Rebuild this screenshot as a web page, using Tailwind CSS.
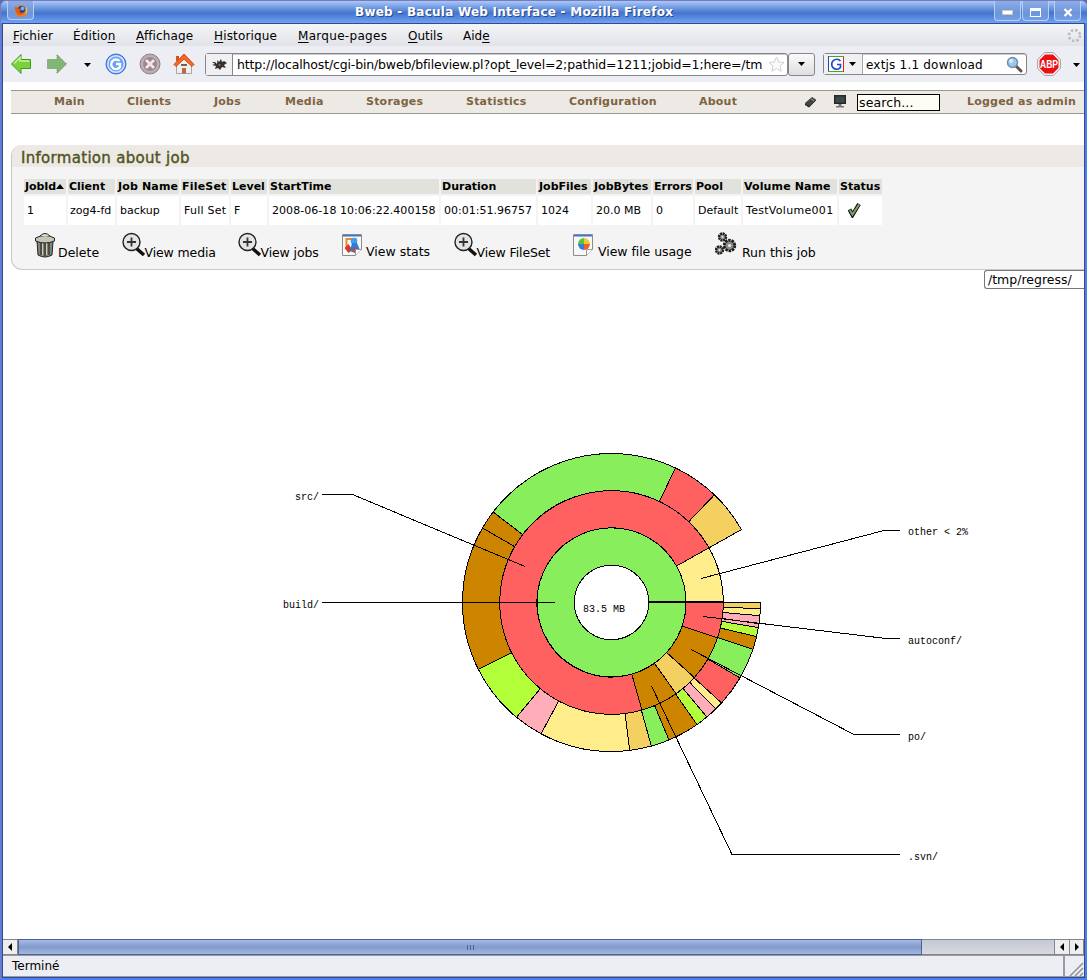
<!DOCTYPE html>
<html lang="fr">
<head>
<meta charset="utf-8">
<title>Bweb - Bacula Web Interface</title>
<script src="https://cdn.jsdelivr.net/npm/@tailwindcss/browser@4"></script>
</head>
<body class="w-[1087px] h-[980px] overflow-hidden bg-[#5e6aa8] font-['DejaVu_Sans',sans-serif] text-[13px] leading-none text-black whitespace-nowrap">
<div class="w-full h-full flex flex-col rounded-t-md overflow-hidden bg-[#4a80f0] border-l border-t border-[#7a7ab8]">

  <!-- Title bar -->
  <header class="h-[22px] shrink-0 flex items-start bg-linear-to-b from-[#a9c8fb] via-[#4574cc] via-55% to-[#6fa3f8]">
    <div class="ml-[6px] w-[27px] h-[19px] rounded-b-sm border border-t-0 border-[#b5d0f8] bg-[#7fa3df]/70 flex justify-center pt-[3px]">
      <svg width="14" height="14" viewBox="0 0 14 14"><circle cx="7" cy="7" r="6" fill="#ee7a14"/><circle cx="7.500" cy="5.500" r="3.600" fill="#1f3f94"/><circle cx="8.500" cy="4.500" r="2" fill="#67b4ee"/><path d="M1 2.500L4.500 4.500L7 5.500L5.500 7.500Q7 10 10.500 8Q9 11.500 5 11Q1 9 1 2.500Z" fill="#e05a10"/><path d="M12 2q3 5-1 9q2-4 1-9" fill="#ffd23c"/></svg>
    </div>
    <div class="ml-[321px] w-[322px] pt-[5px] font-bold text-[12px] tracking-[0.24px] text-white [text-shadow:1px_1px_0_#2c4a86]">Bweb - Bacula Web Interface - Mozilla Firefox</div>
    <div class="ml-[317px] flex">
      <div class="w-[27px] h-[20px] rounded-b-sm border border-t-0 border-[#b5d0f8] bg-[#7fa3df]/70 flex items-center justify-center pt-[3px]"><i class="block w-[11px] h-[5px] bg-white border border-[#cfc8c0]"></i></div>
      <div class="ml-[1px] w-[27px] h-[20px] rounded-b-sm border border-t-0 border-[#b5d0f8] bg-[#7fa3df]/70 flex items-center justify-center pt-[3px]"><i class="block w-[11px] h-[9px] border border-t-[3px] border-white"></i></div>
      <div class="ml-[5px] w-[27px] h-[20px] rounded-b-sm border border-t-0 border-[#b5d0f8] bg-[#7fa3df]/70 flex items-center justify-center pt-[4px]"><svg width="10" height="9" viewBox="0 0 10 9"><path d="M1.500 1l7 7M8.500 1l-7 7" stroke="#fff" stroke-width="2.200"/></svg></div>
    </div>
  </header>

  <div class="grow min-h-0 mx-[1px] mb-[2px] mr-[2px] border border-[#39488a] bg-white flex flex-col">
    <!-- Menu bar -->
    <nav class="h-[22px] shrink-0 flex pt-[6px] pl-[10px] bg-linear-to-b from-[#f4f5f6] to-[#e1e3e8] text-[12px]">
      <div class="w-[60px] tracking-[0.12px]"><u class="underline-offset-2">F</u>ichier</div>
      <div class="w-[63px] tracking-[0.12px]">Éditio<u class="underline-offset-2">n</u></div>
      <div class="w-[78px] tracking-[0.12px]"><u class="underline-offset-2">A</u>ffichage</div>
      <div class="w-[84px] tracking-[0.15px]"><u class="underline-offset-2">H</u>istorique</div>
      <div class="w-[110px] tracking-[0.3px]"><u class="underline-offset-2">M</u>arque-pages</div>
      <div class="w-[55px]"><u class="underline-offset-2">O</u>utils</div>
      <div class="w-[604px]">Aid<u class="underline-offset-2">e</u></div>
      <svg class="-mt-[2px]" width="15" height="15" viewBox="0 0 15 15"><circle cx="7.500" cy="7.500" r="5.500" fill="none" stroke="#b9babd" stroke-width="2.600" stroke-dasharray="2.300 2.020"/></svg>
    </nav>

    <!-- Toolbar -->
    <div class="h-[36px] shrink-0 flex items-center bg-[#edeef3] pl-[8px]">
      <svg width="21" height="22" viewBox="0 0 21 22"><path d="M.5 11L10 1.500V6.500H19.500V15.500H10V20.500Z" fill="#7bd13c" stroke="#3f9a1c"/><path d="M3 10.500L9 4.500V8H18.500" fill="none" stroke="#c6f0a0" stroke-width="1.500"/></svg>
      <svg class="ml-[14px]" width="21" height="22" viewBox="0 0 21 22"><path d="M20.500 11L11 1.500V6.500H1.500V15.500H11V20.500Z" fill="#83b573" stroke="#5d9150" stroke-dasharray="1 1"/></svg>
      <svg class="ml-[17px] mt-[2px]" width="7" height="4" viewBox="0 0 7 4"><path d="M0 0h7L3.500 4z"/></svg>
      <svg class="ml-[14px]" width="22" height="22" viewBox="0 0 22 22"><circle cx="11" cy="11" r="10" fill="#4b8af0" stroke="#3a72d4"/><circle cx="11" cy="11" r="8.300" fill="#6aa0f4" stroke="#dce9ff" stroke-width="1.500"/><path d="M14.500 8A4.800 4.800 0 1 0 15 14V11H11" fill="none" stroke="#fff" stroke-width="2.400"/></svg>
      <svg class="ml-[12px]" width="22" height="22" viewBox="0 0 22 22"><circle cx="11" cy="11" r="10" fill="#b8acae" stroke="#86868a"/><circle cx="11" cy="11" r="7.500" fill="#a08488" stroke="#c9b6b9"/><path d="M7 7l8 8M15 7l-8 8" stroke="#efe6ea" stroke-width="2.800"/></svg>
      <svg class="ml-[12px]" width="22" height="22" viewBox="0 0 22 22"><path d="M3.500 10V20.500H18.500V10L11 4Z" fill="#f1efee" stroke="#aaa3a0"/><path d="M3 3h3v5H3z" fill="#d0551c"/><path d="M1 11.500L11 1L21 11.500L19 13.500L11 6L3 13.500Z" fill="#f4682a" stroke="#d34a12"/><path d="M9 15h4v5.500H9z" fill="#b26a48"/><path d="M8 11h6v2H8z" fill="#7a5c58"/></svg>

      <div class="ml-[10px] w-[583px] h-[23px] rounded-[3px] border border-[#85868c] bg-white flex items-center shadow-[inset_0_1px_0_#ccc]">
        <div class="w-[27px] h-full bg-[#f0f0f3] border-r border-[#85868c] flex items-center justify-center">
          <svg width="15" height="11" viewBox="0 0 15 11"><path d="M0 3L3 3L5 5L5.500 1L7 3L9 0L10 3L12 2L15 4L12 6L14 9L10 8L8 11L6 9L3 10L4 7L0 6L3 5Z" fill="#33302f"/><circle cx="7.500" cy="6" r="1" fill="#b66a3a"/></svg>
        </div>
        <div class="ml-[4px] mt-[2px] w-[528px] text-[12.500px] tracking-[-0.155px] leading-[18px]"><span>http://localhost/cgi-bin/bweb/bfileview.pl?opt_level=2;pathid=1211;jobid=1;here=/tm</span></div>
        <svg class="ml-[3px]" width="17" height="16" viewBox="0 0 17 16"><path d="M8.500 1l2.200 5 5.300.5-4 3.600 1.200 5.200-4.700-2.800-4.700 2.800L5 10.100 1 6.500 6.300 6z" fill="#fbfbfb" stroke="#cfcfcf"/></svg>
      </div>
      <div class="w-[27px] h-[23px] rounded-[3px] border border-[#85868c] bg-linear-to-b from-[#fafafa] to-[#dfdfe0] flex items-center justify-center"><svg width="7" height="4" viewBox="0 0 7 4"><path d="M0 0h7L3.500 4z"/></svg></div>
      <div class="ml-[8px] w-[204px] h-[22px] rounded-[3px] border border-[#85868c] bg-white flex items-center shadow-[inset_0_1px_0_#ccc]">
        <div class="w-[39px] h-full bg-[#f0f0f3] border-r border-[#a5a6ac] flex items-center pl-[4px] gap-[5px]">
          <svg width="16" height="16" viewBox="0 0 16 16"><path d="M0 0h16v16H0z" fill="#fff"/><path d="M0 .5H16" stroke="#3faa28"/><path d="M.5 0V16" stroke="#2343c0"/><path d="M0 15.500H16" stroke="#3faa28"/><path d="M15.500 1V16" stroke="#e02020"/><path d="M12.500 5A5 5 0 1 0 12.500 11.500V8.500H9" fill="none" stroke="#2745c4" stroke-width="1.700"/></svg>
          <svg width="7" height="4" viewBox="0 0 7 4"><path d="M0 0h7L3.500 4z"/></svg>
        </div>
        <div class="ml-[3px] mt-[2px] w-[140px] text-[12px] tracking-[0.2px] leading-[18px]"><span>extjs 1.1 download</span></div>
        <svg width="17" height="17" viewBox="0 0 17 17"><path d="M10 10l5 5" stroke="#5a5450" stroke-width="3" stroke-linecap="round"/><circle cx="6.500" cy="6.500" r="5" fill="#9cc8f0" stroke="#6d8fae" stroke-width="1.500"/><circle cx="5" cy="5" r="2" fill="#d8ecfb"/></svg>
      </div>
      <svg class="ml-[10px]" width="24" height="24" viewBox="0 0 24 24"><path d="M7.500.7h9l6.800 6.800v9l-6.800 6.800h-9L.7 16.500v-9z" fill="#fff" stroke="#999"/><path d="M8 2.500h8l5.500 5.500v8L16 21.500H8L2.500 16V8z" fill="#ed0f12"/><text x="12" y="16" text-anchor="middle" textLength="18" lengthAdjust="spacingAndGlyphs" font-family="Liberation Sans" font-weight="bold" font-size="11.500" fill="#fff">ABP</text></svg>
      <svg class="ml-[12px] mt-[2px]" width="7" height="4" viewBox="0 0 7 4"><path d="M0 0h7L3.500 4z"/></svg>
    </div>

    <!-- Page -->
    <main class="grow min-h-0 pt-[8px] pl-[8px] flex flex-col overflow-hidden">
      <div class="h-[24px] shrink-0 border-y border-[#9a978f] bg-[#edeae5] flex items-center font-bold text-[11px] tracking-[0.22px] text-[#7d6341]">
        <div class="w-[73px] ml-[43px] -mt-[2px]"><span>Main</span></div>
        <div class="w-[87px] -mt-[2px]"><span>Clients</span></div>
        <div class="w-[71px] -mt-[2px]"><span>Jobs</span></div>
        <div class="w-[81px] -mt-[2px]"><span>Media</span></div>
        <div class="w-[100px] -mt-[2px]"><span>Storages</span></div>
        <div class="w-[103px] -mt-[2px]"><span>Statistics</span></div>
        <div class="w-[130px] -mt-[2px]"><span>Configuration</span></div>
        <div class="w-[105px] -mt-[2px]"><span>About</span></div>
        <svg width="13" height="12" viewBox="0 0 13 12"><path d="M1 7L8 1L12 3.500L5 10.500Z" fill="#444"/><path d="M1 7v2l4 2.500 7-7V3.500L5 10z" fill="#222"/><path d="M7 3l3 1.500" stroke="#999"/></svg>
        <svg class="ml-[17px] -mt-[2px]" width="12" height="13" viewBox="0 0 12 13"><path d="M0 0h12v9H0z" fill="#26292b"/><path d="M1.500 1.500h9v6h-9z" fill="#3e474a"/><path d="M4.500 9h3v2h2.500v1.500H2V11h2.500z" fill="#777"/></svg>
        <div class="ml-[11px] w-[83px] h-[17px] mt-[1px] border border-black bg-[#fffcf6] text-black font-normal text-[12.500px] tracking-[0.12px] leading-[16px] pl-[1px]"><span>search...</span></div>
        <div class="ml-[27px] -mt-[2px]"><span>Logged as admin</span></div>
      </div>

      <section class="mt-[31px] h-[125px] shrink-0 rounded-l-[11px] bg-[#f4f4f4] border-l border-b border-[#c9c9c9] overflow-hidden">
        <h1 class="h-[22px] bg-[#edeae5] pl-[9px] pt-[6px] text-[15px] tracking-[0.3px] text-[#515422] [-webkit-text-stroke:0.4px_#515422]"><span>Information about job</span></h1>
        <div class="mt-[12px] ml-[12px] grid gap-x-[2px] gap-y-[2px] grid-cols-[42px_47px_62px_48px_36px_170px_95px_53px_58px_40px_46px_94px_43px] grid-rows-[15px_29px] text-[11px] *:flex *:items-center">
          <b class="bg-[#e2e2dc] pl-px tracking-[-0.1px]">JobId<svg class="shrink-0" width="8" height="5" viewBox="0 0 8 5"><path d="M0 5L4 0L8 5z"/></svg></b>
          <b class="bg-[#e2e2dc] pl-px">Client</b><b class="bg-[#e2e2dc] pl-px tracking-[0.15px]">Job Name</b><b class="bg-[#e2e2dc] pl-px tracking-[0.2px]">FileSet</b><b class="bg-[#e2e2dc] pl-px">Level</b><b class="bg-[#e2e2dc] pl-px">StartTime</b><b class="bg-[#e2e2dc] pl-px">Duration</b><b class="bg-[#e2e2dc] pl-px">JobFiles</b><b class="bg-[#e2e2dc] pl-px">JobBytes</b><b class="bg-[#e2e2dc] pl-px">Errors</b><b class="bg-[#e2e2dc] pl-px">Pool</b><b class="bg-[#e2e2dc] pl-px tracking-[0.12px]">Volume Name</b><b class="bg-[#e2e2dc] pl-px">Status</b>
          <div class="bg-white pl-[3px]">1</div><div class="bg-white pl-[2px]">zog4-fd</div><div class="bg-white pl-[3px]">backup</div><div class="bg-white pl-[3px] tracking-[0.25px]">Full Set</div><div class="bg-white pl-[3px]">F</div><div class="bg-white pl-[3px] tracking-[0.05px]">2008-06-18 10:06:22.400158</div><div class="bg-white pl-[3px]">00:01:51.96757</div><div class="bg-white pl-[3px]">1024</div><div class="bg-white pl-[3px]">20.0 MB</div><div class="bg-white pl-[3px]">0</div><div class="bg-white pl-[3px]">Default</div><div class="bg-white pl-[3px] tracking-[0.3px]">TestVolume001</div>
          <div class="bg-white pl-[9px] pb-[2px]"><svg width="13" height="16" viewBox="0 0 13 16"><path d="M1.500 7.500L4.500 13L11 2" fill="none" stroke="#10150e" stroke-width="4"/><path d="M1.800 8L4.500 12.500L11 2.500" fill="none" stroke="#7da46a" stroke-width="2"/></svg></div>
        </div>
        <div class="flex items-start pt-[7px] pl-[22px] text-[12.500px] tracking-[-0.12px]">
          <div class="w-[88px] flex"><svg width="22" height="26" viewBox="0 0 22 26"><path d="M3 9L4 23Q11 27 18 23L19 9Z" fill="#85857a" stroke="#222"/><path d="M7 11v12M11 11v13M15 11v12" stroke="#3b3b35" stroke-width="1.500"/><path d="M8.500 11v12M12.500 11v12" stroke="#c9c9bb"/><path d="M1.500 6Q11 1 20.500 6V9Q11 13 1.500 9Z" fill="#c7c6b5" stroke="#222"/><path d="M6 4Q11-1 16 4" fill="#ddd" stroke="#222"/></svg><span class="mt-[15px] ml-[2px] tracking-normal">Delete</span></div>
          <div class="w-[116px] flex"><svg width="24" height="26" viewBox="0 0 24 26"><path d="M14 16l8 7" stroke="#111" stroke-width="3.500"/><circle cx="9.500" cy="10" r="8.500" fill="#e4e4e4" stroke="#222" stroke-width="1.400"/><path d="M9.500 5.500v9M5 10h9" stroke="#333" stroke-width="1.800"/></svg><span class="mt-[15px] -ml-[1.500px]">View media</span></div>
          <div class="w-[104px] flex"><svg width="24" height="26" viewBox="0 0 24 26"><path d="M14 16l8 7" stroke="#111" stroke-width="3.500"/><circle cx="9.500" cy="10" r="8.500" fill="#e4e4e4" stroke="#222" stroke-width="1.400"/><path d="M9.500 5.500v9M5 10h9" stroke="#333" stroke-width="1.800"/></svg><span class="mt-[15px] -ml-[1.500px]">View jobs</span></div>
          <div class="w-[112px] flex"><svg class="mt-px" width="21" height="24" viewBox="0 0 21 24"><path d="M.5 1.500h19v15l-6 6H.5z" fill="#f8f8f8" stroke="#8c8c8c"/><path d="M1 2h18v1.500H1z" fill="#3d74d0"/><path d="M4.500 14V6h9v5" fill="none" stroke="#f08a20" stroke-width="2"/><circle cx="12" cy="8" r="3.300" fill="#42a0e8"/><path d="M2.500 15l4-4 4 6-4 3z" fill="#d83a26"/><path d="M8 18l2-8h5l3 7-5 3z" fill="#2b7fd8"/><path d="M10 17l3-3 3 4-3 2z" fill="#d8402c"/><path d="M13.500 22.500v-6h6" fill="#fff" stroke="#999"/></svg><span class="mt-[14px] ml-[3px] tracking-normal">View stats</span></div>
          <div class="w-[119px] flex"><svg width="24" height="26" viewBox="0 0 24 26"><path d="M14 16l8 7" stroke="#111" stroke-width="3.500"/><circle cx="9.500" cy="10" r="8.500" fill="#e4e4e4" stroke="#222" stroke-width="1.400"/><path d="M9.500 5.500v9M5 10h9" stroke="#333" stroke-width="1.800"/></svg><span class="mt-[15px] -ml-[1.500px]">View FileSet</span></div>
          <div class="w-[142px] flex"><svg class="mt-px" width="21" height="24" viewBox="0 0 21 24"><path d="M.5 1.500h19v15l-6 6H.5z" fill="#f8f8f8" stroke="#8c8c8c"/><path d="M1 2h18v1.500H1z" fill="#3d74d0"/><path d="M11 11V5a6 6 0 0 1 6 6z" fill="#f5c33a"/><path d="M11 11h6a6 6 0 0 1-6 6z" fill="#e8632a"/><path d="M11 11v6a6 6 0 0 1-6-6z" fill="#3a7be0"/><path d="M11 11H5a6 6 0 0 1 6-6z" fill="#58c43c"/><path d="M13.500 22.500v-6h6" fill="#fff" stroke="#999"/></svg><span class="mt-[14px] ml-[4px] tracking-[-0.05px]">View file usage</span></div>
          <div class="flex"><svg width="23" height="24" viewBox="0 0 23 24"><g fill="#8d8a84" stroke="#1c1c1c"><circle cx="7.500" cy="5" r="3.500" stroke-width="2.400" stroke-dasharray="2 .7"/><circle cx="14.500" cy="13.500" r="5.300" stroke-width="2.800" stroke-dasharray="2.400 .9"/><circle cx="4.500" cy="18" r="3.500" stroke-width="2.400" stroke-dasharray="2 .7"/></g><circle cx="14.500" cy="13.500" r="1.500" fill="#eee"/><circle cx="7.500" cy="5" r="1" fill="#eee"/><circle cx="4.500" cy="18" r="1" fill="#eee"/></svg><span class="mt-[15px] ml-[4px] tracking-normal">Run this job</span></div>
        </div>
      </section>

      <div class="self-end w-[100px] h-[19px] shrink-0 border border-r-0 border-[#777] rounded-l-[3px] pl-[3px] leading-[17px] text-[12.500px] bg-white"><span>/tmp/regress/</span></div>

      <!-- Disk usage chart -->
      <svg id="chart" class="shrink-0 -ml-[8px]" width="1080" height="650" viewBox="3 289 1080 650" font-family="Liberation Mono" font-size="10"></svg>
    </main>

    <!-- Horizontal scrollbar -->
    <div class="h-[16px] shrink-0 flex border-y border-[#85868c] bg-linear-to-b from-[#c5c9d4] to-[#d6d9e0]">
      <div class="w-[15px] bg-[#eeeeee] border-r border-[#85868c] flex items-center justify-center"><svg width="4" height="8" viewBox="0 0 4 8"><path d="M4 0v8L0 4z"/></svg></div>
      <div class="w-[904px] -my-px border border-[#486494] bg-linear-to-b from-[#a6bce6] via-[#839bcb] to-[#a2b8e2] flex items-center justify-center gap-[2px]"><i class="w-px h-[5px] bg-[#486494]"></i><i class="w-px h-[5px] bg-[#486494]"></i><i class="w-px h-[5px] bg-[#486494]"></i></div>
      <div class="ml-auto w-[15px] bg-[#eeeeee] border-l border-[#85868c] flex items-center justify-center"><svg width="4" height="8" viewBox="0 0 4 8"><path d="M4 0v8L0 4z"/></svg></div>
      <div class="w-[15px] bg-[#eeeeee] border-x border-[#85868c] flex items-center justify-center"><svg width="4" height="8" viewBox="0 0 4 8"><path d="M0 0v8L4 4z"/></svg></div>
    </div>
    <!-- Status bar -->
    <footer class="h-[22px] shrink-0 flex items-center bg-[#edeef3] border-y border-[#9a9ba2] pl-[9px] text-[12px]">
      <span class="leading-[16px]">Terminé</span>
      <div class="ml-auto w-[21px] h-full border-l-2 border-[#9a9ba2] flex items-end justify-end"><svg width="15" height="14" viewBox="0 0 15 14"><path d="M1 14L14 1M6 14l8-8M11 14l3-3" stroke="#8f909a" stroke-width="1.500"/></svg></div>
    </footer>
  </div>
</div>
<script>
const G='#88ee5c',R='#ff6060',B='#cd8500',Y='#f4d060',L='#ffec8b',P='#ffaeb9',M='#b3ff3a';
const cx=611.5,cy=602.5,rings=[37.3,74.5,111.8,149];
// [ring, start angle, end angle, fill]
const segs=[
 [2,0,2.4,Y],[2,2.4,5.1,L],[2,5.1,8.2,P],[2,8.2,9.7,P],[2,9.7,13.2,M],[2,13.2,18.3,B],[2,18.3,30.4,G],[2,30.4,42.4,R],[2,42.4,45.6,L],[2,45.6,50.2,P],[2,50.2,55,M],[2,55,67.3,B],[2,67.3,74.5,G],[2,74.5,83,Y],[2,83,118.2,L],[2,118.2,129.6,P],[2,129.6,153.4,M],[2,153.4,210,B],[2,210,217.4,B],[2,217.4,295.4,G],[2,295.4,313.7,R],[2,313.7,330.7,Y],
 [1,0,18.4,R],[1,18.4,42.2,B],[1,42.2,54.7,Y],[1,54.7,74.2,B],[1,74.2,330.7,R],[1,330.7,359.8,L],
 [0,0,359.8,G]];
const pt=(r,a)=>(cx+r*Math.cos(a*Math.PI/180)).toFixed(2)+' '+(cy+r*Math.sin(a*Math.PI/180)).toFixed(2);
let s='<g stroke="#000" stroke-width="1" shape-rendering="crispEdges">';
for(const [k,a,b,c] of segs){const r=rings[k],q=rings[k+1],f=b-a>180?1:0;
 s+=`<path fill="${c}" d="M${pt(r,a)}L${pt(q,a)}A${q} ${q} 0 ${f} 1 ${pt(q,b)}L${pt(r,b)}A${r} ${r} 0 ${f} 0 ${pt(r,a)}Z"/>`;}
s+='<path d="M649 602H723" stroke-width="2"/>';
for(const p of ['322,494.5 352.5,494.5 525,566.5','322,602.5 555,602.5','701,578.5 884,530.5 900,530.5','703,616.5 886,638.5 900,638.5','691,649.5 854,734.5 900,734.5','651.5,686 732,854.5 900,854.5']) s+=`<polyline fill="none" points="${p}"/>`;
s+='</g>';
for(const [x,y,t] of [[583,612,'83.5 MB'],[295,500,'src/'],[283,608,'build/'],[908,535,'other < 2%'],[908,644,'autoconf/'],[908,740,'po/'],[908,860,'.svn/']]) s+=`<text x="${x}" y="${y}">${t.replace('<','&lt;')}</text>`;
document.getElementById('chart').innerHTML=s;
</script>
</body>
</html>
